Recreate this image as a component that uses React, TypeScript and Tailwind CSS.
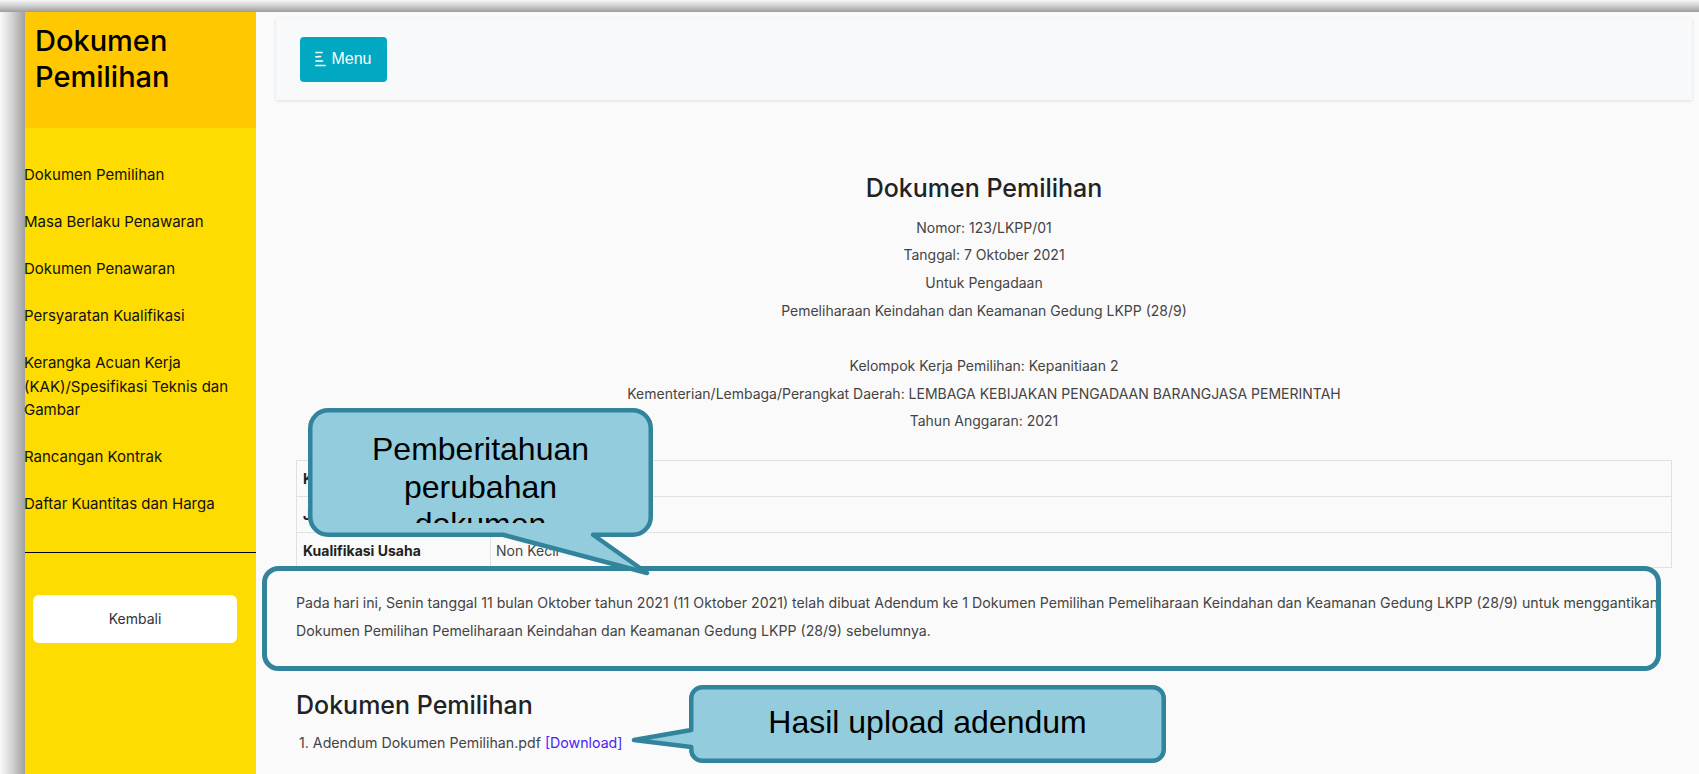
import React from "react";

const menuItems: React.ReactNode[] = [
  "Dokumen Pemilihan",
  "Masa Berlaku Penawaran",
  "Dokumen Penawaran",
  "Persyaratan Kualifikasi",
  <>
    Kerangka Acuan Kerja
    <br />
    (KAK)/Spesifikasi Teknis dan
    <br />
    Gambar
  </>,
  "Rancangan Kontrak",
  "Daftar Kuantitas dan Harga",
];

const subLines = [
  "Nomor: 123/LKPP/01",
  "Tanggal: 7 Oktober 2021",
  "Untuk Pengadaan",
  "Pemeliharaan Keindahan dan Keamanan Gedung LKPP (28/9)",
  "\u00a0",
  "Kelompok Kerja Pemilihan: Kepanitiaan 2",
  "Kementerian/Lembaga/Perangkat Daerah: LEMBAGA KEBIJAKAN PENGADAAN BARANGJASA PEMERINTAH",
  "Tahun Anggaran: 2021",
];

const rows = [
  ["Kode Tender", "12345"],
  ["Jenis Kontrak", "Lumsum"],
  ["Kualifikasi Usaha", "Non Kecil"],
];

function MenuIcon() {
  return (
    <svg width="11" height="16" viewBox="0 0 11 16" fill="none" stroke="white" strokeWidth="1.7" strokeLinecap="round">
      <line x1="1" y1="1.5" x2="7" y2="1.5" />
      <line x1="1" y1="5.8" x2="5.5" y2="5.5" />
      <line x1="1" y1="10" x2="7.5" y2="10" />
      <line x1="1" y1="14.5" x2="10" y2="14.5" />
    </svg>
  );
}

export default function App() {
  return (
    <div className="relative w-[1699px] h-[774px] overflow-hidden bg-[#fafafa] flex flex-col font-['Inter',sans-serif]">
      {/* top shadow band */}
      <div className="h-[12px] w-full shrink-0 bg-gradient-to-b from-[#f7f7f7] via-[#cfcfcf] to-[#9c9c9c]" />
      <div className="flex flex-1 min-h-0">
        {/* left shadow band */}
        <div className="w-[25px] shrink-0 bg-gradient-to-r from-[#fafafa] via-[#d2d2d2] to-[#a0a0a0]" />
        {/* sidebar */}
        <aside className="w-[231px] shrink-0 bg-[#ffdc00] flex flex-col">
          <div className="h-[116px] bg-[#ffc800] pl-[10px] pt-[11px]">
            <div className="text-[29px] leading-[36px] font-medium text-black">
              Dokumen
              <br />
              Pemilihan
            </div>
          </div>
          <nav className="pt-[23.5px] flex flex-col">
            {menuItems.map((m, i) => (
              <div key={i} className="py-[11.75px] text-[15px] leading-[23.5px] text-[#111] whitespace-nowrap -ml-[1px]">
                {m}
              </div>
            ))}
          </nav>
          <div className="mt-[24px] h-px bg-black" />
          <button className="mt-[42px] ml-[8px] w-[204px] h-[48px] rounded-[6px] bg-white text-[14px] text-[#333]">
            Kembali
          </button>
        </aside>
        {/* main */}
        <main className="flex-1 pl-[20px] pr-[7px] pt-[6px] flex flex-col">
          <div className="h-[82px] bg-[#f8f9fa] shadow-[0_1px_3px_rgba(0,0,0,0.12)] px-[24px] flex items-center">
            <button className="h-[45px] w-[87px] rounded-[4px] bg-[#00a8c1] text-white text-[16px] flex items-center justify-center gap-[5px] font-['Liberation_Sans',Arial,sans-serif]">
              <MenuIcon />
              <span>Menu</span>
            </button>
          </div>
          <div className="px-[20px]">
            <h3 className="mt-[69.5px] text-center text-[25px] leading-[36px] font-medium text-[#222]">
              Dokumen Pemilihan
            </h3>
            <div className="mt-[8px] text-center text-[14px] leading-[27.7px] text-[#444]">
              {subLines.map((l, i) => (
                <div key={i}>{l}</div>
              ))}
            </div>
            <div className="mt-[24.75px] border border-[#dee2e6] text-[14px]">
              {rows.map((r, i) => (
                <div key={i} className={`flex h-[35.5px] ${i > 0 ? "border-t border-[#dee2e6]" : ""}`}>
                  <div className="w-[194px] px-[6px] flex items-center font-bold text-[#222] border-r border-[#dee2e6]">{r[0]}</div>
                  <div className="flex-1 px-[5px] flex items-center text-[#444]">{r[1]}</div>
                </div>
              ))}
            </div>
            <p className="mt-[21px] text-[14.15px] leading-[27.5px] text-[#444] whitespace-nowrap">
              Pada hari ini, Senin tanggal 11 bulan Oktober tahun 2021 (11 Oktober 2021) telah dibuat Adendum ke 1 Dokumen Pemilihan Pemeliharaan Keindahan dan Keamanan Gedung LKPP (28/9) untuk menggantikan
              <br />
              Dokumen Pemilihan Pemeliharaan Keindahan dan Keamanan Gedung LKPP (28/9) sebelumnya.
            </p>
            <h4 className="mt-[42.5px] text-[25px] leading-[36px] font-medium text-[#222]">Dokumen Pemilihan</h4>
            <div className="mt-[6.25px] pl-[3px] text-[14.2px] leading-[27.5px] text-[#444]">
              1. Adendum Dokumen Pemilihan.pdf <a className="text-[#4a22f5]">[Download]</a>
            </div>
          </div>
        </main>
      </div>

      {/* annotation overlays */}
      <svg className="absolute left-0 top-0 pointer-events-none" width="1699" height="774" viewBox="0 0 1699 774">
        <rect x="264.5" y="568.5" width="1394" height="100" rx="14" fill="none" stroke="#31849b" strokeWidth="5" />
        <path
          d="M 328.25 410.25 H 632.75 A 18 18 0 0 1 650.75 428.25 V 516.75 A 18 18 0 0 1 632.75 534.75 H 593 L 647 573 L 503 534.75 H 328.25 A 18 18 0 0 1 310.25 516.75 V 428.25 A 18 18 0 0 1 328.25 410.25 Z"
          fill="#93cddd"
          stroke="#31849b"
          strokeWidth="4.5"
          strokeLinejoin="round"
        />
        <path
          d="M 702.25 687.25 H 1152.75 A 11 11 0 0 1 1163.75 698.25 V 749.75 A 11 11 0 0 1 1152.75 760.75 H 702.25 A 11 11 0 0 1 691.25 749.75 V 747 L 634 740 L 691.25 730 V 698.25 A 11 11 0 0 1 702.25 687.25 Z"
          fill="#93cddd"
          stroke="#31849b"
          strokeWidth="4.5"
          strokeLinejoin="round"
        />
      </svg>
      <div className="absolute left-[310px] top-[431.25px] w-[341px] h-[91.5px] overflow-hidden text-center text-[32px] leading-[37.5px] text-black font-['Liberation_Sans',Arial,sans-serif]">
        Pemberitahuan
        <br />
        perubahan
        <br />
        dokumen
      </div>
      <div className="absolute left-[691px] top-[687px] w-[473px] h-[72px] flex items-center justify-center text-[32px] leading-[37.5px] text-black font-['Liberation_Sans',Arial,sans-serif]">
        Hasil upload adendum
      </div>
    </div>
  );
}
